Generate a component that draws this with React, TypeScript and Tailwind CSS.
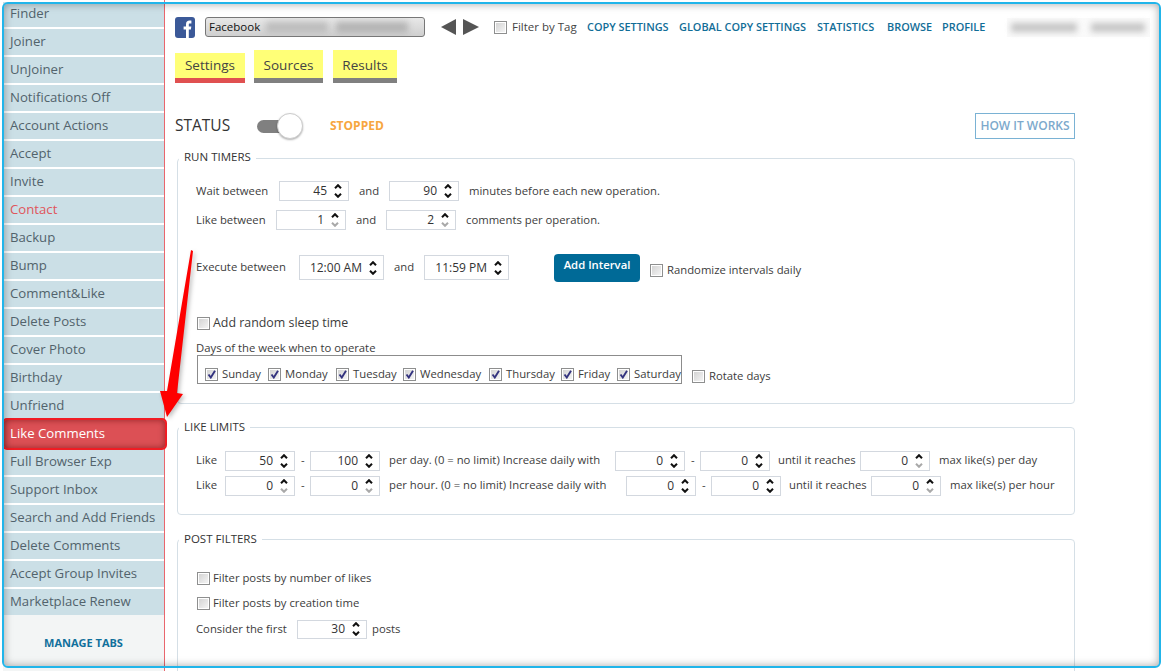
const tabs = [
  'Finder', 'Joiner', 'UnJoiner', 'Notifications Off', 'Account Actions', 'Accept', 'Invite', 'Contact',
  'Backup', 'Bump', 'Comment&Like', 'Delete Posts', 'Cover Photo', 'Birthday', 'Unfriend', 'Like Comments',
  'Full Browser Exp', 'Support Inbox', 'Search and Add Friends', 'Delete Comments', 'Accept Group Invites', 'Marketplace Renew',
];

const days = [
  { name: 'Sunday', width: 'w-[63px]' },
  { name: 'Monday', width: 'w-[68px]' },
  { name: 'Tuesday', width: 'w-[67px]' },
  { name: 'Wednesday', width: 'w-[86px]' },
  { name: 'Thursday', width: 'w-[72px]' },
  { name: 'Friday', width: 'w-[56px]' },
  { name: 'Saturday', width: 'w-[64px]' },
];

function Checkbox({ checked = false }: { checked?: boolean }) {
  return (
    <span className="block w-[13px] h-[13px] shrink-0 border border-[#8e8f8f] bg-white p-[1px]">
      <span className="relative block w-full h-full bg-gradient-to-br from-[#d4d4d4] to-[#f4f4f4]">
        {checked && (
          <svg viewBox="0 0 9 9" className="absolute inset-0 w-full h-full">
            <path d="M1.5 4.5 L3.8 7.5 L8 0.8" fill="none" stroke="#33337f" strokeWidth="1.9" />
          </svg>
        )}
      </span>
    </span>
  );
}

function Chevron({ down = false, off = false }: { down?: boolean; off?: boolean }) {
  return (
    <svg viewBox="0 0 8 5" className="block w-[8px] h-[5px]">
      <path
        d={down ? 'M1 0.7 L4 3.8 L7 0.7' : 'M1 4.3 L4 1.2 L7 4.3'}
        fill="none"
        stroke={off ? '#a9a9a9' : '#111'}
        strokeWidth="2"
      />
    </svg>
  );
}

function Spinner({ value, off = false, width = 'w-[70px]', height = 'h-[20px]' }: {
  value: string;
  off?: boolean;
  width?: string;
  height?: string;
}) {
  return (
    <div className={`${width} ${height} text-[12px] shrink-0 border border-[#d3d8df] bg-white flex items-center justify-end pr-[6px] text-[#333]`}>
      <span className="mr-[7px]">{value}</span>
      <div className="flex flex-col gap-[4px]">
        <Chevron />
        <Chevron down off={off} />
      </div>
    </div>
  );
}

function Sidebar() {
  return (
    <aside className="w-[162px] shrink-0 border-r border-[#e9666d] flex flex-col text-[13.2px] text-[#52636c]">
      {tabs.map((tab, i) => {
        if (tab === 'Like Comments') {
          return (
            <div key={tab} className="relative h-[26px] mb-[2px]">
              <div className="absolute -top-[3px] -bottom-[3px] -left-[1px] -right-[3px] flex items-center pl-[6px] pb-[1px] rounded-[5px] border-2 border-[#f01c24] bg-[#dc5055] shadow-[inset_0_0_6px_rgba(90,0,0,0.55)] text-white font-medium">
                {tab}
              </div>
            </div>
          );
        }
        return (
          <div
            key={tab}
            className={`${i === 0 ? 'h-[25px] mt-[2px]' : 'h-[26px]'} mb-[2px] pb-[1px] bg-[#cbdfe6] flex items-center pl-[7px] ${tab === 'Contact' ? 'text-[#e0565c]' : ''}`}
          >
            {tab}
          </div>
        );
      })}
      <div className="flex-1 -mt-[2px] bg-[#f3f5f5] flex justify-center pt-[20px]">
        <span className="text-[#11709c] text-[11px] font-bold h-[16px]">MANAGE TABS</span>
      </div>
    </aside>
  );
}

function Header() {
  return (
    <div className="flex items-center h-[22px]">
      <svg viewBox="0 0 20 21" className="w-[20px] h-[21px] shrink-0">
        <rect width="20" height="21" rx="3" fill="#3b5998" />
        <path d="M11 21 V12.5 H8.6 V9.4 H11 V7.2 C11 4.9 12.4 3.6 14.5 3.6 C15.4 3.6 16.2 3.7 16.4 3.7 V6.4 H14.9 C13.9 6.4 13.8 6.9 13.8 7.6 V9.4 H16.3 L15.9 12.5 H13.8 V21 Z" fill="#fff" />
      </svg>
      <div className="ml-[10px] w-[220px] h-[20px] rounded-[3px] border border-[#777] bg-gradient-to-b from-[#e8e8e8] to-[#cfcfcf] flex items-center pl-[3px] text-[11.5px] text-[#111] overflow-hidden">
        <span>Facebook</span>
        <span className="ml-[6px] w-[62px] h-[11px] bg-[#bdbdbd] blur-[3px]" />
        <span className="ml-[8px] w-[72px] h-[11px] bg-[#b4b4b4] blur-[3px]" />
      </div>
      <svg viewBox="0 0 38 16" className="ml-[16px] w-[38px] h-[16px] shrink-0">
        <path d="M15 0 V16 L0 8 Z M22 0 L38 8 L22 16 Z" fill="#555" />
      </svg>
      <span className="ml-[15px]"><Checkbox /></span>
      <span className="ml-[5px] w-[75px] text-[11.5px] text-[#444]">Filter by Tag</span>
      <nav className="flex text-[10.9px] font-semibold text-[#116d97]">
        <span className="w-[92px]">COPY SETTINGS</span>
        <span className="w-[138px]">GLOBAL COPY SETTINGS</span>
        <span className="w-[70px]">STATISTICS</span>
        <span className="w-[55px]">BROWSE</span>
        <span className="w-[65px]">PROFILE</span>
      </nav>
      <div className="w-[143px] h-[19px] bg-[#fafafa] flex items-center gap-[14px] pl-[4px]">
        <span className="w-[66px] h-[9px] bg-[#c4c4c4] blur-[3px]" />
        <span className="w-[54px] h-[9px] bg-[#c4c4c4] blur-[3px]" />
      </div>
    </div>
  );
}

function Tabs() {
  return (
    <div className="flex items-end h-[33px] mt-[12px] text-[13.5px] text-[#444]">
      <div className="w-[70px] h-[30px] pb-[1px] bg-[#ffff77] border-b-[5px] border-[#e05050] flex items-center justify-center">Settings</div>
      <div className="ml-[9px] w-[69px] h-[33px] pt-[2px] bg-[#ffff77] border-b-[5px] border-[#808080] flex items-center justify-center">Sources</div>
      <div className="ml-[10px] w-[64px] h-[33px] pt-[2px] bg-[#ffff77] border-b-[5px] border-[#808080] flex items-center justify-center">Results</div>
    </div>
  );
}

function StatusRow() {
  return (
    <div className="flex items-center w-[900px] h-[26px] mt-[30px]">
      <span className="w-[82px] text-[15.5px] text-[#333]">STATUS</span>
      <div className="relative w-[46px] h-[26px] flex items-center">
        <div className="w-[30px] h-[13px] rounded-full bg-[#808080]" />
        <div className="absolute right-0 top-0 w-[26px] h-[26px] rounded-full bg-white border border-[#ccc] shadow-[0_1px_2px_rgba(0,0,0,0.3)]" />
      </div>
      <span className="ml-[27px] text-[12px] font-bold text-[#f7a640]">STOPPED</span>
      <div className="ml-auto w-[100px] h-[26px] border border-[#7ab2d4] flex items-center justify-center text-[12px] font-semibold text-[#7da9cc]">HOW IT WORKS</div>
    </div>
  );
}

function Group({ title, className, children }: { title: string; className: string; children: React.ReactNode }) {
  return (
    <fieldset className={`ml-[2px] w-[898px] border border-[#d5dfe6] rounded-[4px] pl-[18px] ${className}`}>
      <legend className="-ml-[17px] px-[5px] pb-[2px] text-[11.5px] leading-[14px] text-[#333]">{title}</legend>
      {children}
    </fieldset>
  );
}

function RunTimers() {
  return (
    <Group title="RUN TIMERS" className="mt-[11px] pb-[18px]">
      <div className="flex items-center h-[20px] mt-[15px]">
        <span className="w-[83px]">Wait between</span>
        <Spinner value="45" />
        <span className="w-[40px] pl-[10px]">and</span>
        <Spinner value="90" />
        <span className="ml-[10px]">minutes before each new operation.</span>
      </div>
      <div className="flex items-center h-[20px] mt-[9px]">
        <span className="w-[80px]">Like between</span>
        <Spinner value="1" off />
        <span className="w-[40px] pl-[10px]">and</span>
        <Spinner value="2" off />
        <span className="ml-[10px]">comments per operation.</span>
      </div>
      <div className="flex items-center h-[25px] mt-[25px]">
        <span className="w-[103px]">Execute between</span>
        <Spinner value="12:00 AM" width="w-[85px]" height="h-[25px]" />
        <span className="w-[40px] pl-[10px]">and</span>
        <Spinner value="11:59 PM" width="w-[85px]" height="h-[25px]" />
        <div className="ml-[45px] w-[86px] h-[28px] rounded-[4px] bg-[#006a97] text-white font-semibold flex justify-center pt-[3px]">Add Interval</div>
        <span className="ml-[10px] mt-[5px] flex items-center">
          <Checkbox />
          <span className="ml-[4px]">Randomize intervals daily</span>
        </span>
      </div>
      <div className="flex items-center h-[16px] mt-[35px] ml-[1px] text-[12.4px]">
        <Checkbox />
        <span className="ml-[3px]">Add random sleep time</span>
      </div>
      <div className="h-[14px] leading-[13px] mt-[10px]">Days of the week when to operate</div>
      <div className="flex items-start">
        <div className="ml-[1px] w-[485px] h-[29px] border border-[#8c8c8c] flex items-end pl-[7px]">
          {days.map(day => (
            <span key={day.name} className={`${day.width} flex items-center`}>
              <Checkbox checked />
              <span className="ml-[4px]">{day.name}</span>
            </span>
          ))}
        </div>
        <span className="ml-[10px] mt-[13px] flex items-center">
          <Checkbox />
          <span className="ml-[4px]">Rotate days</span>
        </span>
      </div>
    </Group>
  );
}

function LimitRow({ period, first, second, third, fourth, offFirst, gapClass, maxOff }: {
  period: string;
  first: string;
  second: string;
  third: string;
  fourth: string;
  offFirst?: boolean;
  gapClass: string;
  maxOff?: boolean;
}) {
  return (
    <div className="flex items-center h-[20px]">
      <span className="w-[29px]">Like</span>
      <Spinner value={first} off={offFirst} />
      <span className="w-[15px] pl-[6px]">-</span>
      <Spinner value={second} off={offFirst} />
      <span className={`${gapClass} pl-[9px]`}>{period} (0 = no limit) Increase daily with</span>
      <Spinner value={third} />
      <span className="w-[15px] pl-[6px]">-</span>
      <Spinner value={fourth} />
      <span className="w-[90px] pl-[8px]">until it reaches</span>
      <Spinner value="0" off={maxOff} />
      <span className="ml-[9px]">max like(s) per {period === 'per day.' ? 'day' : 'hour'}</span>
    </div>
  );
}

export default function App() {
  return (
    <div className="relative w-[1163px] h-[671px] overflow-hidden bg-white text-[11.3px] whitespace-nowrap text-[#3c3c3c]" style={{ fontFamily: "'Open Sans', sans-serif" }}>
      <div className="flex h-full pl-[3px]">
        <Sidebar />
        <main className="flex-1 pl-[10px] pt-[16px] min-w-0">
          <Header />
          <Tabs />
          <StatusRow />
          <RunTimers />
          <Group title="LIKE LIMITS" className="mt-[16px] pb-[18px]">
            <div className="flex flex-col gap-[5px] mt-[15px]">
              <LimitRow period="per day." first="50" second="100" third="0" fourth="0" gapClass="w-[235px]" maxOff />
              <LimitRow period="per hour." first="0" second="0" third="0" fourth="0" offFirst gapClass="w-[246px]" maxOff />
            </div>
          </Group>
          <Group title="POST FILTERS" className="mt-[17px] pb-[40px]">
            <div className="flex items-center h-[16px] mt-[23px] ml-[1px]">
              <Checkbox />
              <span className="ml-[3px]">Filter posts by number of likes</span>
            </div>
            <div className="flex items-center h-[16px] mt-[9px] ml-[1px]">
              <Checkbox />
              <span className="ml-[3px]">Filter posts by creation time</span>
            </div>
            <div className="flex items-center h-[19px] mt-[8px]">
              <span className="w-[101px]">Consider the first</span>
              <Spinner value="30" height="h-[19px]" />
              <span className="ml-[5px]">posts</span>
            </div>
          </Group>
        </main>
      </div>

      {/* window frame */}
      <div className="absolute left-[2px] top-[2px] w-[1159px] h-[666px] rounded-[6px] border-2 border-[#21b5ea] shadow-[inset_0_0_9px_rgba(0,0,0,0.35)] pointer-events-none" />

      {/* annotation arrow */}
      <svg viewBox="0 0 1163 671" className="absolute inset-0 w-[1163px] h-[671px] pointer-events-none drop-shadow-[2px_2px_2px_rgba(0,0,0,0.25)]">
        <path d="M191 250 L193 251 L177 393 L183 394 L167 417 L160 391 L167 391 Z" fill="#fe0000" />
      </svg>
    </div>
  );
}
